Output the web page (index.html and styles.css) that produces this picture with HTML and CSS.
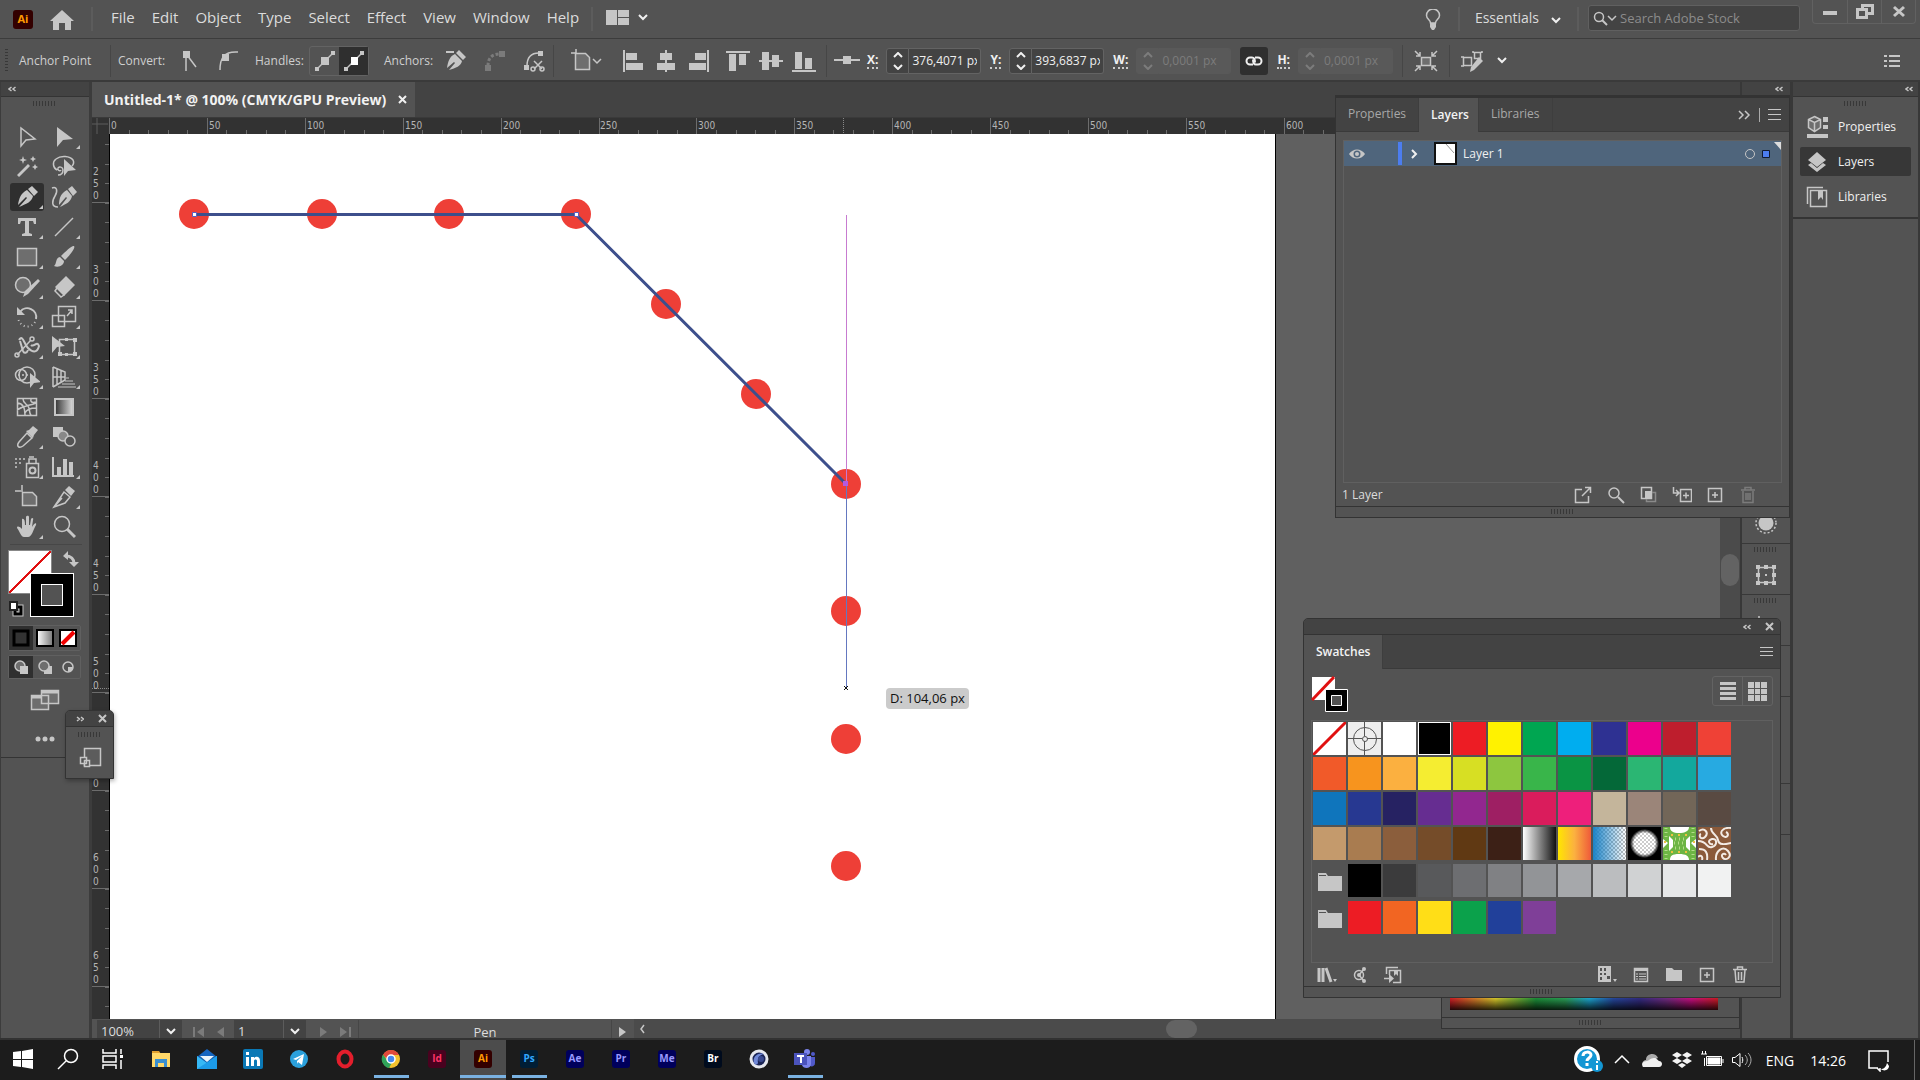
FILE: index.html
```html
<!DOCTYPE html>
<html lang="en">
<head>
    <meta charset="UTF-8">
    <meta name="viewport" content="width=device-width, initial-scale=1.0">
    <title>Untitled-1* @ 100% (CMYK/GPU Preview)</title>
    <link rel="stylesheet" href="styles.css">
</head>
<body>
    <header class="menubar">
        <span class="ai-logo">Ai</span>
        <button class="home" aria-label="Home"><svg width="24" height="20" class="solid"><path d="M12 0 0 11h3v9h6v-7h6v7h6v-9h3z"/></svg></button>
        <i class="sep"></i>
        <nav class="menus">
            <button>File</button><button>Edit</button><button>Object</button><button>Type</button><button>Select</button><button>Effect</button><button>View</button><button>Window</button><button>Help</button>
        </nav>
        <i class="sep"></i>
        <button class="arrange" aria-label="Arrange documents">
            <svg width="23" height="15" class="solid"><path d="M0 0h11v15H0zM12 0h11v7H12zM12 8h11v7H12z"/></svg>
            <svg width="10" height="7" class="chev"><path d="M1 1l4 4 4-4"/></svg>
        </button>
        <button class="bulb" aria-label="Learn"><svg width="16" height="21" class="line"><path d="M5.500 14c0-3-4-4-4-7.500a6 6 0 0 1 13 0c0 3.500-4 4.500-4 7.500z"/><path class="f" d="M5 14h6v4l-2 3H7l-2-3z"/></svg></button>
        <i class="sep"></i>
        <button class="essentials">Essentials <svg width="10" height="7" class="chev"><path d="M1 1l4 4 4-4"/></svg></button>
        <i class="sep"></i>
        <label class="search">
            <svg width="24" height="15" class="line"><circle cx="6" cy="6" r="4.500"/><path d="M9 9l5 5" stroke-width="2"/><path d="M15 5l4 4 4-4"/></svg>
            <input type="text" placeholder="Search Adobe Stock">
        </label>
        <div class="win-buttons">
            <button aria-label="Minimize"><svg width="14" height="16" class="solid"><path d="M0 7h14v4H0z"/></svg></button>
            <button aria-label="Restore"><svg width="18" height="16" class="line thick"><path d="M6.500 5V1.500h10v8H12M1.500 5.500h9v8h-9z"/></svg></button>
            <button aria-label="Close"><svg width="14" height="14" class="line thick"><path d="M2 2l10 9M12 2L2 11"/></svg></button>
        </div>
    </header>

    <section class="controlbar">
        <i class="side-grip"></i>
        <span class="mode">Anchor Point</span>
        <i class="sep"></i>
        <span class="group-label">Convert:</span>
        <button class="ctl"><svg width="24" height="24" class="line"><path d="M8 4v18M9 6l9 12"/><path class="f" d="M5 2h7v7H5z"/></svg></button>
        <button class="ctl"><svg width="24" height="24" class="line"><path d="M3 21c0-12 4-19 18-18"/><path class="f" d="M5 5h7v7H5z"/></svg></button>
        <span class="group-label">Handles:</span>
        <div class="toggle">
            <button aria-label="Show handles"><svg width="22" height="22" class="line"><path d="M3 19L19 3"/><path class="f" d="M1 17h4v4H1zM17 1h4v4h-4zM7 7h8v8H7z"/></svg></button>
            <button class="on" aria-label="Hide handles"><svg width="22" height="22" class="line"><path d="M3 19L19 3"/><path class="f" d="M1 17h4v4H1zM17 1h4v4h-4z"/><path fill="#fff" stroke="none" d="M8 7h7v8H8z"/></svg></button>
        </div>
        <span class="group-label">Anchors:</span>
        <button class="ctl"><svg width="24" height="24" class="solid"><path d="M2 2h8v2H2zM12 4l3-3 7 7-3 3zM11 5l7 7c-1 5-6 7-13 9l6-7-1-1-7 6c1-7 3-12 8-14z"/></svg></button>
        <button class="ctl dim"><svg width="24" height="24" class="line"><path d="M5 17C5 9 9 5 17 5" stroke-width="3" stroke-dasharray="3 2"/><path class="f" d="M2 16h6v6H2zM16 2h6v6h-6z"/></svg></button>
        <button class="ctl"><svg width="24" height="24" class="line"><path d="M5 17C5 9 9 4 17 4M12 12l8 8M20 12l-8 8"/><circle cx="11" cy="20" r="2"/><circle cx="20" cy="20" r="2"/><path class="f" d="M2 16h5v5H2zM16 2h5v5h-5z"/></svg></button>
        <i class="sep"></i>
        <button class="ctl wide"><svg width="32" height="24" class="line"><path d="M5 0v5M0 4h5"/><path fill="#6e6e6e" d="M4.500 4.500h10l4 4v12h-14z"/><path d="M22 10l4 4 4-4"/></svg></button>
        <div class="aligns">
            <button><svg width="22" height="24" class="solid"><path d="M1 1h2v22H1zM4 4h11v7H4zM4 14h17v7H4z"/></svg></button>
            <button><svg width="22" height="24" class="solid"><path d="M10 1h2v22h-2zM5 4h12v7H5zM2 14h18v7H2z"/></svg></button>
            <button><svg width="22" height="24" class="solid"><path d="M19 1h2v22h-2zM7 4h11v7H7zM1 14h17v7H1z"/></svg></button>
        </div>
        <div class="aligns">
            <button><svg width="24" height="22" class="solid"><path d="M0 1h24v2H0zM3 4h7v17H3zM13 4h7v11h-7z"/></svg></button>
            <button><svg width="24" height="22" class="solid"><path d="M0 10h24v2H0zM3 2h7v18H3zM13 5h7v12h-7z"/></svg></button>
            <button><svg width="24" height="22" class="solid"><path d="M0 20h24v2H0zM3 2h7v17H3zM13 8h7v11h-7z"/></svg></button>
        </div>
        <i class="sep"></i>
        <button class="ctl narrow"><svg width="26" height="12" class="solid"><path d="M0 4h26v2H0zM9 1h8v8H9z"/></svg></button>
        <div class="field"><label for="px">X:</label>
            <span class="spin"><svg width="12" height="18" class="chev"><path d="M2 5l4-4 4 4M2 13l4 4 4-4"/></svg></span><input id="px" type="text" value="376,4071 px"></div>
        <div class="field"><label for="py">Y:</label>
            <span class="spin"><svg width="12" height="18" class="chev"><path d="M2 5l4-4 4 4M2 13l4 4 4-4"/></svg></span><input id="py" type="text" value="393,6837 px"></div>
        <div class="field off"><label for="pw">W:</label>
            <span class="spin"><svg width="12" height="18" class="chev"><path d="M2 5l4-4 4 4M2 13l4 4 4-4"/></svg></span><input id="pw" type="text" value="0,0001 px" disabled></div>
        <button class="link-wh" aria-label="Constrain"><svg width="20" height="12" class="chev"><path d="M9 9.500H6a3.500 3.500 0 0 1 0-7h2c3 0 3 3 3 5M11 2.500h3a3.500 3.500 0 0 1 0 7h-2c-3 0-3-3-3-5"/></svg></button>
        <div class="field off"><label for="ph">H:</label>
            <span class="spin"><svg width="12" height="18" class="chev"><path d="M2 5l4-4 4 4M2 13l4 4 4-4"/></svg></span><input id="ph" type="text" value="0,0001 px" disabled></div>
        <i class="sep"></i>
        <button class="ctl mid"><svg width="24" height="22" class="line"><path fill="#6e6e6e" d="M7.500 7.500h9v8h-9z"/><path d="M1 1l5 5M6 2v4H2M23 1l-5 5M18 2v4h4M1 21l5-5M2 16h4v4M23 21l-5-5M22 16h-4v4"/></svg></button>
        <i class="sep"></i>
        <button class="ctl mid"><svg width="24" height="24" class="line"><path d="M2.500 8.500h8v8h-8zM13.500 3.500h6v6h-6zM0 8h3M0 17h3M12 2v2M21 2v2"/><path class="f" d="M9 23l1-5 8-10 4 4-9 9z"/></svg></button>
        <svg width="12" height="8" class="chev"><path d="M2 1l4 4 4-4"/></svg>
        <button class="bar-menu" aria-label="Control menu"><svg width="16" height="14" class="solid"><path d="M0 1h3v2H0zM5 1h11v2H5zM0 6h3v2H0zM5 6h11v2H5zM0 11h3v2H0zM5 11h11v2H5z"/></svg></button>
    </section>

    <main class="workspace">
        <aside class="tools">
            <div class="dock-head left"><svg width="8" height="6" class="line"><path d="M3.500 1L1 3l2.500 2M7.500 1L5 3l2.500 2"/></svg></div>
            <i class="grip"></i>
            <div class="tool-grid">
                <button><svg width="24" height="24" class="line"><path d="M6 3v18l5-6 9-1z"/></svg></button>
                <button class="more"><svg width="24" height="24" class="solid"><path d="M5 2v20l6-7 10-1z"/></svg></button>
                <button><svg width="24" height="24" class="solid"><path d="M2 20L13 9l2 2L4 22zM8 1l1 3 3 1-3 1-1 3-1-3-3-1 3-1zM18 1l1 2 2 1-2 1-1 2-1-2-2-1 2-1zM20 9l1 2 2 1-2 1-1 2-1-2-2-1 2-1z"/></svg></button>
                <button><svg width="24" height="24" class="line"><path d="M6 20c3 0 5-2 5-5s-4-4-5-2 2 4 3 2M5 15C1 13 0 7 4 4c5-4 14-3 17 1 1 2 1 4-1 6"/><path class="f" d="M12 4v17l4-5 8-1z"/></svg></button>
                <button class="more on"><svg width="24" height="24" class="solid"><path d="M13 4l4-3 6 6-4 4zM12 5l6 6c-1 6-7 8-14 11l8-9-1-1-8 8c1-7 3-12 9-15z"/></svg></button>
                <button><svg width="26" height="24" class="line"><path d="M1 3c5-2 6 3 3 8s-4 11 3 11"/><path class="f" d="M17 4l4-3 5 6-4 4zM16 5l5 6c-1 6-6 8-12 11l7-9-1-1-7 8c0-7 2-12 8-15z"/></svg></button>
                <button class="more"><svg width="24" height="24" class="solid"><path d="M3 3h18v6h-2l-1-3h-4v12l3 1v2H7v-2l3-1V6H6L5 9H3z"/></svg></button>
                <button class="more"><svg width="24" height="24" class="line"><path d="M3 21L21 3"/></svg></button>
                <button class="more"><svg width="24" height="24" class="line"><path fill="#6e6e6e" d="M2.500 3.500h19v17h-19z"/></svg></button>
                <button class="more"><svg width="24" height="24" class="solid"><path d="M22 1c2 2-5 10-9 14l-4-4c5-5 11-11 13-10zM8 12l4 4c0 4-5 7-10 5 3-2 1-8 6-9z"/></svg></button>
                <button class="more"><svg width="26" height="24" class="line"><circle cx="9" cy="10" r="7.500" fill="#6e6e6e"/><path class="f" d="M9 22l2-6L24 4l2 2-12 13z"/></svg></button>
                <button class="more"><svg width="24" height="24" class="line"><path class="f" d="M14 1l9 9-11 11-9-9z"/><path d="M5 13l7 7-3 2-6-6z" fill="#535353"/></svg></button>
                <button class="more"><svg width="24" height="24" class="line"><path d="M5 7c6-8 18-2 16 7" stroke-width="2"/><path d="M20 17c-4 7-15 6-17-4" stroke-width="2" stroke-dasharray="1 3"/><path class="f" d="M2 2v8h8z"/></svg></button>
                <button class="more"><svg width="26" height="24" class="line"><path d="M7.500 1.500h17v15h-17zM1.500 10.500h12v11h-12zM16 11l5-6M17 5h4v4"/></svg></button>
                <button class="more"><svg width="26" height="24" class="line"><path d="M5 5c4-6 5 4 9 8s9 6 11-2c-2-6-5 2-8-1M6 6l3 10c1 3 4 2 5-1" stroke-width="2"/><path d="M3 20L17 5"/><circle cx="3" cy="20" r="2"/><circle cx="18" cy="4" r="2"/></svg></button>
                <button class="more"><svg width="26" height="24" class="line"><path d="M8.500 4.500h15v15h-15z"/><path class="f" d="M1 1v17l5-6 8-1zM22 3h4v4h-4zM22 17h4v4h-4zM7 17h4v4H7zM14 3h3v3h-3zM14 18h3v3h-3z"/></svg></button>
                <button class="more"><svg width="26" height="24" class="line"><circle cx="13" cy="10" r="8"/><circle cx="7" cy="10" r="5.500"/><path d="M4 10h12" stroke-dasharray="2 2"/><path class="f" d="M16 8v15l4-5 7-1z"/></svg></button>
                <button class="more"><svg width="26" height="24" class="line"><path d="M2 2v20M2 2l12 5v8L2 22M6 4v15M10 5v12M2 12h12"/><path d="M15 13h3M14 16h8M11 19h13M7 22h18" stroke-width="1"/></svg></button>
                <button><svg width="24" height="24" class="line"><path d="M2.500 3.500h19v17h-19zM2 8c6 0 8 4 8 12M2 15c8-5 12-4 19-7M8 4c0 5 5 5 6 9 1 3 0 5 2 7M21 13c-5 0-9 1-11 5M16 4c-1 3 1 4 5 3"/></svg></button>
                <button><svg width="24" height="24"><defs><linearGradient id="gt"><stop offset="0" stop-color="#333"/><stop offset="1" stop-color="#ddd"/></linearGradient></defs><path fill="url(#gt)" stroke="#c6c6c6" stroke-width="2" d="M3 4h18v16H3z"/></svg></button>
                <button class="more"><svg width="24" height="24" class="line"><path d="M12 8l5 5-9 8c-4 3-7 0-4-4z"/><path class="f" d="M11 6l3-1 4-4 5 4-4 5-1 3z"/></svg></button>
                <button><svg width="26" height="24" class="line"><path class="f" d="M2 2h10v10H2z"/><circle cx="12" cy="11" r="5" fill="#888"/><circle cx="19" cy="16" r="5" fill="#535353"/></svg></button>
                <button class="more"><svg width="26" height="24" class="line"><path d="M12.500 8.500h12v14h-12zM15 8V4h7v4M15 2h5"/><circle cx="18.500" cy="15.500" r="3" stroke-width="2"/><path d="M1 4h10M1 8h8M1 12h4" stroke-dasharray="2 2"/></svg></button>
                <button class="more"><svg width="26" height="24" class="solid"><path d="M1 2h2v18h20v2H1zM6 12h4v8H6zM12 4h4v16h-4zM18 7h4v13h-4z"/></svg></button>
                <button><svg width="26" height="26" class="line"><path d="M8 1v7M1 7h6"/><path fill="#6e6e6e" d="M8.500 8.500h10l4 4v9h-14z"/></svg></button>
                <button class="more"><svg width="24" height="24" class="line"><path d="M2 22L12 7l6 5-5 6zM2 22l8-9"/><path class="f" d="M13 5l4-4 6 5-4 5z"/></svg></button>
                <button class="more"><svg width="24" height="24" class="solid"><path d="M7 4c2-1 3 1 3 6h1V2c1-2 3-1 3 0v8h1l1-6c1-2 3-1 2 1l-1 7c2-4 5-5 4-2-3 5-4 12-8 12h-4c-3 0-5-7-7-9 0-2 2-2 5 1z"/></svg></button>
                <button><svg width="24" height="24" class="line"><circle cx="10" cy="9" r="7.500"/><path d="M15 14l8 8" stroke-width="3"/></svg></button>
            </div>
            <div class="paint">
                <span class="paint-fill"></span>
                <span class="paint-stroke"></span>
                <svg class="paint-swap line" width="16" height="16"><path d="M2 5c6 0 9 2 9 8" stroke-width="3"/><path class="f" d="M0 5l5-5v9zM6 11h10l-5 5z"/></svg>
                <svg class="paint-default" width="16" height="16"><path fill="none" stroke="#c6c6c6" stroke-width="5" d="M7 6h6v7H7z"/><path fill="none" stroke="#000" stroke-width="3" d="M7 6h6v7H7z"/><path fill="#fff" stroke="#222" stroke-width="2" d="M2 1h7v8H2z"/></svg>
            </div>
            <div class="trio">
                <button class="on"><svg width="18" height="18"><path fill="#333" stroke="#000" stroke-width="3" d="M2 2h14v14H2z"/></svg></button>
                <button><svg width="18" height="18"><defs><linearGradient id="gm"><stop offset="0" stop-color="#fff"/><stop offset="1" stop-color="#777"/></linearGradient></defs><path fill="url(#gm)" stroke="#000" stroke-width="2" d="M1 1h16v16H1z"/></svg></button>
                <button><svg width="18" height="18"><path fill="#fff" stroke="#000" stroke-width="2" d="M1 1h16v16H1z"/><path stroke="#f00000" stroke-width="4" d="M3 15L15 3"/></svg></button>
            </div>
            <div class="trio modes">
                <button class="on"><svg width="16" height="16" class="line"><circle cx="7" cy="7" r="5" fill="#6e6e6e"/><path class="f" d="M7 7h8v8H7z"/></svg></button>
                <button><svg width="16" height="16" class="line"><path class="f" d="M7 7h8v8H7z"/><circle cx="7" cy="7" r="5" fill="#6e6e6e"/></svg></button>
                <button><svg width="16" height="16" class="line"><circle cx="8" cy="8" r="5"/><path class="f" d="M8 8h5c0 3-2 5-5 5z"/></svg></button>
            </div>
            <button class="screen-mode"><svg width="30" height="22" class="line"><path fill="#6e6e6e" d="M1.500 6.500h17v14h-17zM11.500 1.500h17v13h-17z"/><path d="M11 3h17M1 8h10" stroke-width="3"/></svg></button>
            <button class="dots"><svg width="20" height="6" class="solid"><circle cx="3" cy="3" r="2.500"/><circle cx="10" cy="3" r="2.500"/><circle cx="17" cy="3" r="2.500"/></svg></button>
        </aside>

        <section class="document">
            <div class="tabs">
                <div class="doc-tab">Untitled-1* @ 100% (CMYK/GPU Preview) <button aria-label="Close document"><svg width="10" height="10" class="chev"><path d="M1 1l7 7M8 1L1 8"/></svg></button></div>
            </div>
            <!-- 97.9px per 50 units -->
            <svg class="ruler-x" height="16">
                <path d="M0 6h16M5 0v16" stroke="#5c5c5c"/>
                <g shape-rendering="crispEdges" stroke="#6c6c6c">
                    <path d="M17 8h1700" stroke-width="16" stroke-dasharray="1 96.900"/>
                    <path d="M17 14h1700" stroke-width="4" stroke-dasharray="1 18.580"/>
                </g>
                <path d="M751.500 0v16" stroke="#888" stroke-dasharray="1 1"/>
                <g class="ruler-text">
                    <text x="19" y="11">0</text><text x="117" y="11">50</text><text x="215" y="11">100</text><text x="313" y="11">150</text><text x="411" y="11">200</text><text x="508" y="11">250</text><text x="606" y="11">300</text><text x="704" y="11">350</text><text x="802" y="11">400</text><text x="900" y="11">450</text><text x="998" y="11">500</text><text x="1096" y="11">550</text><text x="1194" y="11">600</text>
                </g>
            </svg>
            <div class="view">
                <svg class="ruler-y" width="17">
                    <g shape-rendering="crispEdges" stroke="#6c6c6c">
                        <path d="M8 68v900" stroke-width="17" stroke-dasharray="1 97"/>
                        <path d="M15 10v900" stroke-width="4" stroke-dasharray="1 18.600"/>
                    </g>
                    <path d="M0 554.500h17" stroke="#888" stroke-dasharray="1 1"/>
                    <g class="ruler-text">
                        <text x="1" y="41">2</text><text x="1" y="53">5</text><text x="1" y="65">0</text>
                        <text x="1" y="139">3</text><text x="1" y="151">0</text><text x="1" y="163">0</text>
                        <text x="1" y="237">3</text><text x="1" y="249">5</text><text x="1" y="261">0</text>
                        <text x="1" y="335">4</text><text x="1" y="347">0</text><text x="1" y="359">0</text>
                        <text x="1" y="433">4</text><text x="1" y="445">5</text><text x="1" y="457">0</text>
                        <text x="1" y="531">5</text><text x="1" y="543">0</text><text x="1" y="555">0</text>
                        <text x="1" y="629">5</text><text x="1" y="641">5</text><text x="1" y="653">0</text>
                        <text x="1" y="727">6</text><text x="1" y="739">0</text><text x="1" y="751">0</text>
                        <text x="1" y="825">6</text><text x="1" y="837">5</text><text x="1" y="849">0</text>
                    </g>
                </svg>
                <div class="canvas">
                    <svg class="artboard">
                        <g fill="#ee3f37">
                            <circle cx="84" cy="80" r="15"/><circle cx="212" cy="80" r="15"/><circle cx="339" cy="80" r="15"/><circle cx="466" cy="80" r="15"/>
                            <circle cx="556" cy="170" r="15"/><circle cx="646" cy="260" r="15"/><circle cx="736" cy="350" r="15"/>
                            <circle cx="736" cy="477" r="15"/><circle cx="736" cy="605" r="15"/><circle cx="736" cy="732" r="15"/>
                        </g>
                        <path d="M84 80.500h382L735 349" fill="none" stroke="#3d4f8c" stroke-width="3"/>
                        <path d="M736.500 81v269" stroke="#c77bd0"/>
                        <path d="M736.500 350v203" stroke="#6478c0"/>
                        <path d="M82.500 78.500h4v4h-4zM464.500 78.500h4v4h-4z" fill="#fff" stroke="#5a5fc0"/>
                        <path d="M733 347h5v5h-5z" fill="#b45ae0"/>
                        <path d="M734 552l4 4M738 552l-4 4" stroke="#111"/>
                    </svg>
                    <output class="measure">D: 104,06 px</output>
                </div>
                <div class="scroll-y"><i></i></div>
            </div>
            <div class="status">
                <input class="zoom" type="text" value="100%" aria-label="Zoom">
                <button class="drop"><svg width="10" height="7" class="chev"><path d="M1 1l4 4 4-4"/></svg></button>
                <button class="step"><svg width="12" height="10" class="solid"><path d="M0 0h2v10H0zM11 0v10L4 5z"/></svg></button>
                <button class="step"><svg width="8" height="10" class="solid"><path d="M7 0v10L0 5z"/></svg></button>
                <input class="board" type="text" value="1" aria-label="Artboard">
                <button class="drop"><svg width="10" height="7" class="chev"><path d="M1 1l4 4 4-4"/></svg></button>
                <button class="step"><svg width="8" height="10" class="solid"><path d="M1 0v10l7-5z"/></svg></button>
                <button class="step"><svg width="12" height="10" class="solid"><path d="M10 0h2v10h-2zM1 0v10l7-5z"/></svg></button>
                <span class="tool-name">Pen</span>
                <button class="play"><svg width="8" height="10" class="solid"><path d="M0 0v10l7-5z"/></svg></button>
                <div class="scroll-x"><svg width="8" height="10" class="line"><path d="M5 1L2 5l3 4"/></svg><i></i></div>
            </div>
        </section>

        <aside class="icon-dock">
            <div class="dock-head"><svg width="8" height="6" class="line"><path d="M3.500 1L1 3l2.500 2M7.500 1L5 3l2.500 2"/></svg></div>
            <div class="dock-cell first"><svg width="24" height="24" class="line"><circle cx="12" cy="12" r="10" stroke-dasharray="2 2"/><circle class="f" cx="12" cy="12" r="7.500"/></svg></div>
            <div class="dock-cell"><i class="grip"></i><svg width="22" height="22" class="line"><path d="M3.500 3.500h15v15h-15z"/><path class="f" d="M1 1h4v4H1zM9 1h4v4H9zM17 1h4v4h-4zM1 9h4v4H1zM17 9h4v4h-4zM1 17h4v4H1zM9 17h4v4H9zM17 17h4v4h-4zM10 10h2v2h-2z"/></svg></div>
            <div class="dock-cell"><i class="grip"></i><svg width="20" height="20" class="line"><path d="M3 1v12M3 4h12"/></svg></div>
            <div class="dock-cell"></div>
            <div class="dock-cell tall"></div>
            <div class="dock-cell"></div>
        </aside>

        <aside class="panel-dock">
            <div class="dock-head"><svg width="8" height="6" class="line"><path d="M3.500 1L1 3l2.500 2M7.500 1L5 3l2.500 2"/></svg></div>
            <div class="dock-group">
                <i class="grip"></i>
                <button><svg width="22" height="24" class="line"><path fill="#6e6e6e" d="M8.500 1.500l6 3v8l-6 4-6-4v-8zM2.500 4.500l6 3 6-3M8.500 8v8"/><path class="f" d="M17 2h5v5h-5zM17 10h5v4h-5zM1 19h21v4H1z"/></svg>Properties</button>
                <button class="on"><svg width="22" height="24" class="solid"><path d="M11 2l9 8-9 7-9-7zM2 15l3-2 6 5 6-5 3 2-9 7z"/></svg>Layers</button>
                <button><svg width="22" height="24" class="line"><path d="M1.500 19V2.500H17M4.500 5.500h16v16h-16z"/><path class="f" d="M12 6h5v9l-2-3-3 3z"/></svg>Libraries</button>
            </div>
        </aside>

        <section class="color-panel">
            <i class="spectrum"></i>
            <div class="resizer"><i class="grip"></i></div>
        </section>

        <section class="panel layers">
            <div class="panel-tabs">
                <button>Properties</button><button class="on">Layers</button><button>Libraries</button>
                <span class="tab-tools"><svg width="14" height="10" class="line"><path d="M2 1l4 4-4 4M8 1l4 4-4 4"/></svg><i></i><svg width="13" height="11" class="solid"><path d="M0 0h13v1H0zM0 5h13v1H0zM0 10h13v1H0z"/></svg></span>
            </div>
            <div class="layer-list">
                <div class="layer-row">
                    <svg class="eye" width="18" height="12"><path fill="#c6c6c6" d="M1 6c4-6 12-6 16 0-4 6-12 6-16 0z"/><circle cx="9" cy="6" r="3.500" fill="#4f657c"/><circle cx="9" cy="6" r="2" fill="#c6c6c6"/></svg>
                    <i class="layer-mark"></i>
                    <svg width="8" height="12" class="chev"><path d="M2 2l4 4-4 4"/></svg>
                    <svg class="thumb" width="23" height="23"><path fill="#fff" stroke="#111" stroke-width="2" d="M1 1h21v21H1z"/><path stroke="#999" fill="none" d="M12 2l8 9"/></svg>
                    <span>Layer 1</span>
                    <svg class="target" width="40" height="24"><circle cx="9" cy="12" r="4.500" fill="none" stroke="#c6c6c6"/><path fill="#4c7df0" stroke="#111a30" d="M21.500 8.500h7v7h-7z"/><path fill="#ddd" d="M33 0h7v8z"/></svg>
                </div>
            </div>
            <div class="panel-foot">
                <span>1 Layer</span>
                <button><svg width="18" height="18" class="line"><path d="M8 3.500H1.500v13h13V10M8 10l8-8M11 1.500h5.500V7"/></svg></button>
                <button><svg width="18" height="18" class="line"><circle cx="7" cy="7" r="5"/><path d="M11 11l6 6" stroke-width="2"/></svg></button>
                <button><svg width="18" height="18" class="line"><path d="M1.500 1.500h10v11h-10z"/><path d="M6.500 6.500h9v9h-9z" stroke="#8a8a8a"/><path class="f" d="M5 5h7v8H5z"/></svg></button>
                <button><svg width="20" height="18" class="line"><path d="M1.500 1v6H6M4 4l3 3-3 3M8.500 3.500h11v12h-11zM11 9.500h6M14 6.500v6"/></svg></button>
                <button><svg width="18" height="18" class="line"><path d="M2.500 2.500h13v13h-13zM6 9h6M9 6v6"/></svg></button>
                <button class="dim"><svg width="18" height="18" class="line"><path d="M2 4h14M6 4V1.500h6V4M4 5v11.500h10V5M7 7v7M9 7v7M11 7v7"/></svg></button>
            </div>
            <div class="resizer"><i class="grip"></i></div>
        </section>

        <section class="panel swatches">
            <div class="panel-head"><svg width="8" height="6" class="line"><path d="M3.500 1L1 3l2.500 2M7.500 1L5 3l2.500 2"/></svg><svg width="9" height="9" class="line bold"><path d="M1 1l7 7M8 1L1 8"/></svg></div>
            <div class="panel-tabs">
                <button class="on">Swatches</button>
                <span class="tab-tools"><svg width="13" height="10" class="solid"><path d="M0 0h13v1H0zM0 4h13v1H0zM0 8h13v1H0z"/></svg></span>
            </div>
            <div class="swatch-bar">
                <svg width="38" height="38"><path fill="#fff" d="M1 1h23v23H1z"/><path stroke="#e01010" stroke-width="3" d="M1 24L23 1"/><path fill="#000" stroke="#fff" d="M14.500 13.500h22v22h-22z"/><path fill="#535353" stroke="#fff" d="M20.500 19.500h10v10h-10z"/></svg>
                <div class="view-toggle">
                    <button aria-label="List view"><svg width="16" height="19" class="solid"><path d="M0 0h16v3H0zM0 5h16v3H0zM0 10h16v3H0zM0 15h16v3H0z"/></svg></button>
                    <button aria-label="Thumbnail view"><svg width="19" height="19" class="solid"><path d="M0 0h6v6H0zM7 0h5v6H7zM13 0h6v6h-6zM0 7h6v5H0zM7 7h5v5H7zM13 7h6v5h-6zM0 13h6v6H0zM7 13h5v6H7zM13 13h6v6h-6z"/></svg></button>
                </div>
            </div>
            <div class="swatch-box">
                <div class="swatch-grid">
                    <b><svg width="33" height="33"><path fill="#fff" d="M0 0h33v33H0z"/><path stroke="#e01010" stroke-width="3" d="M0 33L33 0"/></svg></b>
                    <b><svg width="33" height="33"><path fill="#eee" d="M0 0h33v33H0z"/><g fill="none" stroke="#555"><circle cx="17" cy="17" r="11.500"/><circle cx="17" cy="17" r="2.500"/><path d="M0 16.500h14M19 16.500h14M16.500 0v14M16.500 19v14"/></g></svg></b>
                    <b style="background:#fff"></b><b class="picked" style="background:#000"></b><b style="background:#ed1c24"></b><b style="background:#fff200"></b><b style="background:#00a651"></b><b style="background:#00adef"></b><b style="background:#2e3192"></b><b style="background:#ec008c"></b><b style="background:#be1e2d"></b><b style="background:#ef4136"></b>
                    <b style="background:#f15a29"></b><b style="background:#f7941e"></b><b style="background:#fbb040"></b><b style="background:#f5ed31"></b><b style="background:#d7df23"></b><b style="background:#8dc63f"></b><b style="background:#39b54a"></b><b style="background:#0a9444"></b><b style="background:#046838"></b><b style="background:#2bb673"></b><b style="background:#13a89d"></b><b style="background:#27aae1"></b>
                    <b style="background:#0f75bc"></b><b style="background:#273891"></b><b style="background:#262262"></b><b style="background:#662d91"></b><b style="background:#92278f"></b><b style="background:#9e1f63"></b><b style="background:#da1c5c"></b><b style="background:#ee1f7b"></b><b style="background:#c4b59b"></b><b style="background:#9b8579"></b><b style="background:#726658"></b><b style="background:#594a42"></b>
                    <b style="background:#c49a6c"></b><b style="background:#a97c50"></b><b style="background:#8b5e3c"></b><b style="background:#754c29"></b><b style="background:#603913"></b><b style="background:#3c2016"></b>
                    <b class="g-gray"></b><b class="g-sun"></b><b class="g-sky"></b>
                    <b class="g-fade"><i></i></b>
                    <b><svg width="33" height="33"><path fill="#fff" d="M0 0h33v33H0z"/><path fill="#6db544" d="M0 0h7c0 4 3 6 9 6s10-2 10-6h7v12l-5 4 5 5v12h-7c0-4-3-6-10-6s-9 2-9 6H0V21l5-5-5-4z"/><path fill="#fff" d="M6 9l4 4v7l-4 4zM27 9l-4 4v7l4 4z"/><path stroke="#b4dc8a" stroke-width="3" stroke-dasharray="1 3" fill="none" d="M3 1v10M30 1v10M3 23v10M30 23v10M12 12h11M11 16h12M12 21h11"/><path stroke="#f0c040" stroke-width="2" stroke-dasharray="2 5" fill="none" d="M8 8h18M8 25h18M2 14v6M31 14v6"/></svg></b>
                    <b><svg width="33" height="33"><path fill="#8b5a3a" d="M0 0h33v33H0z"/><g fill="none" stroke="#f3ebe4" stroke-width="2"><path d="M1 4c6-4 10 2 6 6s-7-2-4-3M0 14c10 0 8 8 14 6s5-9 0-8-3 6 1 5M33 1c-9-1-12 5-8 8s7-2 3-4M18 33c-1-9 7-15 12-9s-2 10-5 7 1-6 3-3M1 22c7 0 9 4 8 11M13 1c0 6 6 6 7 12s8 4 13 3M0 30c3-3 5 0 4 3"/></g></svg></b>
                </div>
                <div class="swatch-grid group">
                    <svg class="folder" width="33" height="33"><path fill="#c6c6c6" d="M5 9h8l2 3h14v15H5z"/><path stroke="#535353" d="M6 11.500h7"/></svg>
                    <b style="background:#000"></b><b style="background:#3b3b3c"></b><b style="background:#58595b"></b><b style="background:#6d6e71"></b><b style="background:#808184"></b><b style="background:#929497"></b><b style="background:#a6a8ab"></b><b style="background:#bbbdbf"></b><b style="background:#d0d2d3"></b><b style="background:#e6e7e8"></b><b style="background:#f1f2f2"></b>
                </div>
                <div class="swatch-grid group">
                    <svg class="folder" width="33" height="33"><path fill="#c6c6c6" d="M5 9h8l2 3h14v15H5z"/><path stroke="#535353" d="M6 11.500h7"/></svg>
                    <b style="background:#ed1c24"></b><b style="background:#f26522"></b><b style="background:#ffde17"></b><b style="background:#0ba14b"></b><b style="background:#21409a"></b><b style="background:#7f3f98"></b>
                </div>
            </div>
            <div class="panel-foot">
                <button><svg width="20" height="16" class="line"><path d="M2 1v14M6 1v14M9 1l5 14" stroke-width="3"/><path class="f" d="M16 12h4l-2 3z"/></svg></button>
                <button><svg width="16" height="16" class="line"><circle cx="7" cy="8" r="4.500"/><path d="M7 8l5-6M7 8l5 6"/><circle class="f" cx="7" cy="8" r="2"/><circle class="f" cx="12" cy="2" r="2"/><circle class="f" cx="12" cy="14" r="2"/></svg></button>
                <button class="push"><svg width="18" height="18" class="line"><path d="M2.500 8V1.500H14M9 16.500h7.500v-12h-11V9M0 12.500h7"/><path class="f" d="M5 8l5 4.500L5 17zM10 5h4v5l-2-2-2 2z"/></svg></button>
                <button><svg width="19" height="17" class="solid"><path d="M0 0h13v16H0z"/><path fill="#535353" stroke="none" d="M2 2h2v3H2zM6 2h2v3H6zM2 7h2v2H2zM6 7h2v2H6zM2 11h2v3H2zM9 10h3v3H9z"/><path d="M15 13h4l-2 3z"/></svg></button>
                <button><svg width="16" height="16" class="line"><path d="M1.500 1.500h13v13h-13z"/><path d="M1 2.500h14" stroke-width="3"/><path d="M3 7h2M6 7h7M3 9.500h2M6 9.500h7M3 12h2M6 12h7" stroke-width="1"/></svg></button>
                <button><svg width="18" height="15" class="solid"><path d="M1 1h6l2 2h8v11H1z"/></svg></button>
                <button><svg width="16" height="16" class="line"><path d="M1.500 1.500h13v13h-13zM5 8h6M8 5v6"/></svg></button>
                <button><svg width="16" height="17" class="line"><path d="M1 3.500h14M5.500 3V1h5v2M3 4l1 12h8l1-12M6.500 6v8M9.500 6v8"/></svg></button>
            </div>
            <div class="resizer"><i class="grip"></i></div>
        </section>

        <section class="mini-panel">
            <div class="panel-head"><svg width="8" height="6" class="line"><path d="M1 1l2.500 2L1 5M5 1l2.500 2L5 5"/></svg><svg width="9" height="9" class="line bold"><path d="M1 1l7 7M8 1L1 8"/></svg></div>
            <i class="grip"></i>
            <svg width="24" height="22" class="line"><path fill="#5c5c5c" d="M6.500 1.500h16v17h-16z"/><path fill="#535353" d="M6.500 13.500h5v6h-5zM2.500 10.500h6v6h-6z"/></svg>
        </section>
    </main>

    <footer class="taskbar">
        <button class="sys"><svg width="20" height="20" fill="#fff"><path d="M0 3l8-1v8H0zM9 2l11-2v10H9zM0 11h8v7l-8-1zM9 11h11v9L9 18z"/></svg></button>
        <button class="sys"><svg width="22" height="22" fill="none" stroke="#fff" stroke-width="1.500"><circle cx="14" cy="8" r="6.500"/><path d="M9 13l-8 8"/></svg></button>
        <button class="sys last"><svg width="22" height="20" fill="none" stroke="#fff" stroke-width="1.500"><path d="M1 0v4h13V0M1 20v-4h13v4M1 7h13v6H1zM19 0v5M19 11v9"/><path fill="#fff" stroke="none" d="M18 6h3v3h-3z"/></svg></button>
        <button class="app"><svg width="20" height="18"><path fill="#e0a030" d="M1 1h7l2 3H1z"/><path fill="#ffd869" d="M1 3h18v14H1z"/><path fill="#3a8fd0" d="M4 9h12v8h-3v-4H7v4H4z"/></svg></button>
        <button class="app"><svg width="22" height="20"><path fill="#1565c0" d="M1 8l10-8 10 8z"/><path fill="#36b8f5" d="M1 7h20v13H1z"/><path fill="#1460b0" d="M1 7l10 7 10-7z"/><path fill="#eaf4fb" d="M4 7h14l-7 6z"/><path fill="#1c9be8" d="M1 20L21 7v13z"/></svg></button>
        <button class="app"><svg width="20" height="20"><rect width="20" height="20" rx="2" fill="#0a78b5"/><path fill="#fff" d="M3 8h3v9H3zM3 3h3v3H3zM8 8h3v1c2-2 6-2 6 3v5h-3v-5c0-2-3-2-3 0v5H8z"/></svg></button>
        <button class="app"><svg width="18" height="18"><circle cx="9" cy="9" r="9" fill="#2ba0db"/><path fill="#fff" d="M3 9l11-5-2 11-4-3-1 2v-3l5-5-6 4z"/></svg></button>
        <button class="app"><svg width="18" height="20"><ellipse cx="9" cy="10" rx="6.500" ry="7.500" fill="none" stroke="#e31e2c" stroke-width="4"/></svg></button>
        <button class="app open"><svg width="20" height="20"><circle cx="10" cy="10" r="9" fill="#f2c12e"/><path fill="#e04a3c" d="M2 6a9 9 0 0 1 16 0h-8L6 10z"/><path fill="#2fa35a" d="M2 5.500l5 7 4 1-3 5.500A9 9 0 0 1 2 5.500z"/><circle cx="10" cy="10" r="4" fill="#4688f0" stroke="#fff" stroke-width="1.500"/></svg></button>
        <button class="app"><span class="cc id">Id</span></button>
        <button class="app open active"><span class="cc ai">Ai</span></button>
        <button class="app open"><span class="cc ps">Ps</span></button>
        <button class="app"><span class="cc ae">Ae</span></button>
        <button class="app"><span class="cc ae">Pr</span></button>
        <button class="app"><span class="cc ae">Me</span></button>
        <button class="app"><span class="cc br">Br</span></button>
        <button class="app"><svg width="20" height="20"><circle cx="10" cy="10" r="8" fill="#1a2456" stroke="#e6e8ee" stroke-width="3"/><path fill="#6f87d6" d="M5 14c-2-6 4-11 10-9-5 1-7 4-6 9-1 2-3 2-4 0z"/><circle cx="12" cy="10" r="3" fill="#3a4a90"/></svg></button>
        <button class="app open"><svg width="22" height="20"><circle cx="13" cy="3" r="3" fill="#7b83eb"/><circle cx="19" cy="5" r="2" fill="#5059c9"/><path fill="#5059c9" d="M15 8h6v6c0 3-3 4-5 3z"/><path fill="#7b83eb" d="M8 7h9v8c0 5-8 5-9 1z"/><path fill="#4b53bc" d="M0 4h13v12H0z"/><path fill="#fff" d="M3 6h7v2H8v6H6V8H3z"/></svg></button>
        <div class="tray">
            <svg class="help" width="30" height="28"><circle cx="14" cy="13" r="11.500" fill="#1497d4" stroke="#fff" stroke-width="3"/><path d="M10 10c0-5 8-5 8-1 0 3-4 3-4 6M14 17v3" stroke="#fff" stroke-width="3" fill="none"/><circle cx="24" cy="20" r="6" fill="#1497d4"/><path stroke="#fff" stroke-width="2" d="M24 19v5M24 15v2"/></svg>
            <svg width="30" height="20" fill="none" stroke="#fff" stroke-width="1.500"><path d="M8 13l7-7 7 7"/></svg>
            <svg width="30" height="20"><path fill="#aaa" d="M5 15c0-4 3-5 4-5 0-7 10-8 12-2z"/><path fill="#f0f0f0" d="M6 17c-2-3 0-6 4-6 2 0 3-3 7-3 3 0 3 2 5 3 4 0 4 6 0 6z"/></svg>
            <svg width="30" height="20" fill="#f4f4f4"><path d="M10 2l5 3-5 3-5-3zM20 2l5 3-5 3-5-3zM10 8l5 3-5 3-5-3zM20 8l5 3-5 3-5-3zM15 13l4 2-4 3-4-3z"/></svg>
            <svg width="30" height="20" fill="none" stroke="#fff"><path d="M9.500 6.500h15v9h-15zM26 9v4M7.500 8v8M4 4h6M5.500 1v3M8.500 1v3"/><path fill="#fff" d="M11 8h12v6H11z"/></svg>
            <svg width="30" height="20" fill="none" stroke="#fff"><path d="M5.500 7.500H8l5-4v13l-5-4H5.500zM15 7c1 2 1 4 0 6"/><path stroke="#aaa" d="M18 5c3 3 3 7 0 10M21 3c4 4 4 10 0 14"/></svg>
            <span class="lang">ENG</span>
            <time>14:26</time>
            <svg class="notif" width="22" height="22" fill="none" stroke="#fff" stroke-width="1.500"><path d="M10 18H1V1h19v11M9 18l3 3v-3"/><path fill="#fff" stroke="none" d="M19 13c-1 4-3 6-6 6 3 3 8 1 8-3z"/></svg>
            <i class="peek"></i>
        </div>
    </footer>
</body>
</html>
```
FILE: styles.css
```css
* {
    box-sizing: border-box;
}

html, body {
    margin: 0;
    height: 100%;
}

body {
    display: flex;
    flex-direction: column;
    overflow: hidden;
    background: #535353;
    color: #dcdcdc;
    font-family: "Open Sans", "Noto Sans", sans-serif;
    font-size: 12px;
}

button, input {
    margin: 0;
    padding: 0;
    border: 0;
    background: none;
    color: inherit;
    font: inherit;
    min-width: 0;
}

svg {
    display: block;
    flex: none;
}

.solid {
    fill: #c6c6c6;
}

.line {
    fill: none;
    stroke: #c6c6c6;
    stroke-width: 1.5;
}

.line.bold {
    stroke-width: 2;
}

.line.thick {
    stroke-width: 3;
}

.line .f {
    fill: #c6c6c6;
    stroke: none;
}

.chev {
    fill: none;
    stroke: #f0f0f0;
    stroke-width: 2;
}

.dim {
    opacity: 0.35;
}

.sep {
    flex: none;
    width: 1px;
    height: 32px;
    background: #464646;
}

.grip {
    display: block;
    width: 24px;
    height: 5px;
    margin: 0 auto;
    background: repeating-linear-gradient(90deg, #383838 0 1px, transparent 1px 3px);
}

/* Menu bar */
.menubar {
    display: flex;
    align-items: center;
    flex: none;
    height: 39px;
    padding: 0 4px 0 13px;
    border-bottom: 1px solid #3c3c3c;
}

.menubar .sep {
    width: 2px;
    height: 24px;
    background: #5c5c5c;
}

.ai-logo {
    width: 20px;
    height: 19px;
    border-radius: 3px;
    background: #330000;
    color: #ff9a00;
    font-size: 11px;
    font-weight: 700;
    line-height: 18px;
    text-align: center;
}

.home {
    margin: 2px 17px 0;
}

.menus {
    display: flex;
    gap: 1px;
    margin: 0 4px 0 10px;
    padding-bottom: 4px;
    font-size: 15px;
}

.menus button {
    padding: 0 8px;
}

.arrange {
    display: flex;
    align-items: center;
    gap: 9px;
    margin-left: 13px;
    padding-bottom: 3px;
}

.bulb {
    margin: 0 17px 0 auto;
}

.essentials {
    display: flex;
    align-items: center;
    gap: 12px;
    padding: 0 16px 4px 15px;
    font-size: 14px;
}

.essentials svg {
    margin-top: 6px;
}

.search {
    display: flex;
    align-items: center;
    width: 212px;
    height: 26px;
    margin: 0 12px 2px 9px;
    padding-left: 4px;
    border: 1px solid #606060;
    border-radius: 3px;
    background: #434343;
    font-size: 13px;
}

.search input {
    flex: 1;
    padding-left: 3px;
}

.search input::placeholder {
    color: #8c8c8c;
}

.win-buttons {
    display: flex;
    align-self: flex-start;
    height: 24px;
    border: 1px solid #616161;
    border-top: 0;
    border-radius: 0 0 4px 4px;
}

.win-buttons button {
    display: grid;
    place-items: center;
    width: 34px;
}

.win-buttons button + button {
    border-left: 1px solid #616161;
}

/* Control bar */
.controlbar {
    display: flex;
    align-items: center;
    flex: none;
    height: 43px;
    padding: 2px 20px 0 5px;
    border-bottom: 2px solid #3a3a3a;
    white-space: nowrap;
}

.side-grip {
    width: 3px;
    height: 24px;
    margin-right: 11px;
    background: repeating-linear-gradient(#383838 0 1px, transparent 1px 3px);
}

.mode {
    width: 91px;
    color: #cfcfcf;
}

.group-label {
    width: 52px;
    margin-left: 7px;
    color: #cfcfcf;
}

.ctl {
    display: grid;
    place-items: center;
    flex: none;
    width: 39px;
    height: 28px;
}

.toggle {
    display: flex;
    border: 1px solid #636363;
    border-radius: 3px;
    margin: 0 8px 0 2px;
}

.toggle button {
    display: grid;
    place-items: center;
    width: 29px;
    height: 28px;
}

.toggle .on, .link-wh {
    background: #2f2f2f;
}

.controlbar > .wide {
    width: 50px;
    margin: 0 4px 0 8px;
}

.controlbar > .mid {
    width: 46px;
}

.controlbar > .narrow {
    width: 40px;
}

.aligns {
    display: flex;
    margin-right: 6px;
}

.aligns button {
    display: grid;
    place-items: center;
    width: 33px;
}

.field {
    display: flex;
    align-items: center;
    flex: none;
    margin-right: 9px;
}

.field label {
    margin-right: 8px;
    color: #f0f0f0;
    border-bottom: 2px dotted #ccc;
    font-size: 12px;
    line-height: 15px;
    font-weight: 700;
}

.field .spin {
    display: grid;
    place-items: center;
    width: 23px;
    height: 26px;
    border: 1px solid #636363;
    background: #434343;
    border-radius: 3px 0 0 3px;
}

.field input {
    width: 72px;
    height: 26px;
    padding: 0 3px;
    border: 1px solid #636363;
    border-left: 0;
    border-radius: 0 3px 3px 0;
    background: #434343;
    color: #f0f0f0;
}

.field.off input, .field.off .spin {
    border-color: #595959;
    background: #595959;
    color: #7c7c7c;
}

.off .chev {
    stroke: #7c7c7c;
}

.link-wh {
    display: grid;
    place-items: center;
    flex: none;
    width: 28px;
    height: 28px;
    margin-right: 9px;
    border-radius: 3px;
}

.bar-menu {
    margin-left: auto;
}

/* Workspace */
.workspace {
    position: relative;
    display: flex;
    flex: 1;
    min-height: 0;
    border-bottom: 2px solid #323232;
}

.dock-head {
    display: flex;
    align-items: center;
    justify-content: flex-end;
    height: 15px;
    padding: 0 7px;
    border-bottom: 1px solid #343434;
    background: #434343;
}

.dock-head.left {
    justify-content: flex-start;
}

.tools {
    flex: none;
    width: 92px;
    border-right: 3px solid #3c3c3c;
    border-left: 1px solid #3c3c3c;
}

.tools > .grip {
    margin-top: 4px;
}

.tool-grid {
    display: grid;
    grid-template-columns: 34px 34px;
    grid-auto-rows: 28px;
    gap: 2px 3px;
    margin: 17px 7px 0 9px;
    padding-bottom: 3px;
    border-bottom: 1px solid #474747;
}

.tool-grid button {
    position: relative;
    display: grid;
    place-items: center;
    border-radius: 3px;
}

.tool-grid .on, .trio .on {
    background: #2f2f2f;
}

.more::after {
    content: "";
    position: absolute;
    right: 1px;
    bottom: 2px;
    border: 2px solid #c6c6c6;
    border-top-color: transparent;
    border-left-color: transparent;
}

.paint {
    position: relative;
    height: 70px;
    margin: 5px 7px;
}

.paint-fill, .paint-stroke {
    position: absolute;
    left: 0;
    top: 0;
    width: 44px;
    height: 44px;
    border: 1px solid #888;
    background: linear-gradient(135deg, #fff 48%, #e01010 48% 52%, #fff 52%);
}

.paint-stroke {
    left: 22px;
    top: 23px;
    border-color: #fff;
    background: #535353;
    box-shadow: inset 0 0 0 10px #000, inset 0 0 0 11px #fff;
}

.paint-swap {
    position: absolute;
    left: 55px;
    top: 1px;
}

.paint-default {
    position: absolute;
    left: 0;
    top: 51px;
}

.trio {
    display: flex;
    width: 73px;
    height: 26px;
    margin: 0 7px 4px;
    border: 1px solid #606060;
    border-radius: 2px;
}

.trio.modes {
    height: 24px;
}

.trio button {
    display: grid;
    flex: 1;
    place-items: center;
}

.screen-mode, .dots {
    display: block;
    margin: 10px auto 0 29px;
}

.dots {
    margin: 25px 0 0 34px;
}

.tools::after {
    content: "";
    display: block;
    margin-top: 15px;
    border-top: 1px solid #343434;
}

/* Document */
.document {
    display: flex;
    flex-direction: column;
    flex: 1;
    min-width: 0;
}

.tabs {
    display: flex;
    flex: none;
    height: 36px;
    background: #434343;
    border-bottom: 1px solid #3a3a3a;
}

.doc-tab {
    display: flex;
    align-items: center;
    gap: 12px;
    padding: 0 7px 0 12px;
    background: #535353;
    color: #f2f2f2;
    font-size: 14px;
    font-weight: 700;
}

.ruler-x, .ruler-y {
    background: #323232;
}

.ruler-x {
    width: 100%;
}

.ruler-text {
    fill: #b4b4b4;
    font-family: "DejaVu Sans Condensed", "DejaVu Sans", sans-serif;
    font-size: 10px;
}

.view {
    display: flex;
    flex: 1;
    min-height: 0;
}

.ruler-y {
    height: 100%;
}

.canvas {
    position: relative;
    flex: 1;
    overflow: hidden;
    border-left: 1px solid #000;
    background: #606060;
}

.artboard {
    width: 1166px;
    height: 100%;
    border-right: 1px solid #000;
    background: #fff;
}

.measure {
    position: absolute;
    left: 776px;
    top: 554px;
    padding: 0 4px;
    border-radius: 4px;
    background: #cbcbcb;
    color: #111;
    font-size: 13px;
    line-height: 21px;
}

.scroll-y {
    width: 20px;
    padding: 420px 1px 0;
    background: #4b4b4b;
}

.scroll-y i {
    display: block;
    height: 32px;
    border-radius: 9px;
    background: #636363;
}

.status {
    display: flex;
    align-items: flex-end;
    flex: none;
    height: 19px;
    padding-left: 5px;
    font-size: 13px;
}

.status input {
    width: 63px;
    height: 18px;
    padding: 3px 4px 0;
    border-right: 1px solid #5c5c5c;
    background: #434343;
}

.status .board {
    width: 50px;
    margin-left: 2px;
}

.status .drop, .status .step, .status .play {
    display: grid;
    place-items: center;
    width: 22px;
    height: 18px;
    padding-top: 5px;
}

.status .drop {
    margin-right: 6px;
    background: #434343;
}

.status .step {
    opacity: 0.35;
}

.tool-name {
    width: 254px;
    height: 18px;
    margin-left: 2px;
    border: 0 solid #464646;
    border-width: 0 1px;
    line-height: 24px;
    text-align: center;
}

.scroll-x {
    display: flex;
    align-items: center;
    flex: 1;
    height: 19px;
    padding-left: 5px;
    background: #4b4b4b;
}

.scroll-x i {
    width: 31px;
    height: 18px;
    margin-left: 519px;
    border-radius: 9px;
    background: #636363;
}

/* Docks */
.icon-dock {
    flex: none;
    width: 50px;
    border-left: 2px solid #383838;
}

.dock-cell {
    height: 51px;
    padding-top: 3px;
    border-bottom: 1px solid #383838;
}

.dock-cell svg {
    margin: 12px auto 0;
}

.dock-cell.first {
    height: 447px;
    padding-top: 402px;
}

.dock-cell.tall {
    height: 87px;
}

.panel-dock {
    flex: none;
    width: 130px;
    border: 0 solid #383838;
    border-width: 0 2px 0 3px;
}

.panel-dock .dock-head {
    padding-right: 5px;
}

.dock-group {
    display: flex;
    flex-direction: column;
    gap: 6px;
    padding: 4px 7px 6px;
    border-bottom: 2px solid #343434;
}

.dock-group button {
    display: flex;
    align-items: center;
    gap: 10px;
    height: 29px;
    padding-left: 6px;
    border-radius: 2px;
    color: #f0f0f0;
}

.dock-group .on {
    background: #373737;
}

/* Floating panels */
.panel, .color-panel, .mini-panel {
    position: absolute;
    display: flex;
    flex-direction: column;
    border: 1px solid #333;
    background: #535353;
}

.panel-head {
    display: flex;
    align-items: center;
    justify-content: flex-end;
    gap: 14px;
    height: 16px;
    padding-right: 6px;
    border-bottom: 1px solid #333;
    background: #434343;
}

.panel-tabs {
    display: flex;
    height: 34px;
    border-bottom: 1px solid #3a3a3a;
    background: #434343;
    color: #a8a8a8;
}

.panel-tabs button {
    padding: 0 12px 2px;
    border-right: 1px solid #3e3e3e;
}

.panel-tabs .on {
    margin-bottom: -1px;
    padding-right: 9px;
    background: #535353;
    color: #f4f4f4;
    font-weight: 600;
}

.tab-tools {
    display: flex;
    align-items: center;
    gap: 8px;
    margin-left: auto;
    padding-right: 8px;
}

.tab-tools i {
    width: 1px;
    height: 14px;
    background: #aaa;
}

.panel-foot {
    display: flex;
    align-items: center;
    height: 23px;
}

.panel-foot button {
    display: grid;
    place-items: center;
    width: 33px;
}

.resizer {
    height: 11px;
    padding-top: 2px;
    border-top: 1px solid #333;
}

.layers {
    top: 13px;
    right: 130px;
    width: 455px;
    border-top-width: 3px;
}

.layer-list {
    height: 343px;
    margin: 8px 7px 0;
    border: 1px solid #606060;
}

.layer-row {
    display: flex;
    align-items: center;
    height: 25px;
    background: #4f657c;
    color: #f0f0f0;
}

.eye {
    margin: 0 24px 0 4px;
}

.layer-mark {
    width: 4px;
    height: 23px;
    margin: 0 8px;
    background: #4c7df0;
}

.thumb {
    margin: 0 6px 0 16px;
}

.target {
    margin-left: auto;
}

.layers .panel-foot {
    padding: 0 25px 0 6px;
}

.layers .panel-foot span {
    margin-right: auto;
}

.swatches {
    top: 536px;
    right: 139px;
    width: 478px;
    border-radius: 5px 5px 0 0;
    overflow: hidden;
}

.swatches .panel-tabs .on {
    padding-right: 12px;
}

.swatches .tab-tools {
    padding-right: 7px;
}

.swatch-bar {
    display: flex;
    justify-content: space-between;
    padding: 7px;
    height: 51px;
}

.view-toggle {
    display: flex;
    width: 61px;
    height: 30px;
    border: 1px solid #636363;
    border-radius: 3px;
}

.view-toggle button {
    display: grid;
    flex: 1;
    place-items: center;
}

.view-toggle button + button {
    border-left: 1px solid #636363;
}

.swatch-box {
    height: 243px;
    margin: 0 7px;
    padding: 1px 0 0 1px;
    border: 1px solid #606060;
}

.swatch-grid {
    display: grid;
    grid-template-columns: repeat(12, 33px);
    grid-auto-rows: 33px;
    gap: 2px;
}

.swatch-grid.group {
    margin-top: 4px;
}

.picked {
    border: 1px solid #fff;
}

.g-gray {
    background: linear-gradient(90deg, #fff, #111);
}

.g-sun {
    background: linear-gradient(90deg, #ffe600, #fbb040 50%, #ef5a3a);
}

.g-sky {
    background: linear-gradient(90deg, #1c83c6, transparent), repeating-conic-gradient(#fff 0 25%, #bbb 0 50%) 0 0 / 4px 4px;
}

.g-fade {
    background: #000;
}

.g-fade i {
    display: block;
    height: 100%;
    background: radial-gradient(circle, transparent 45%, #000 62%), repeating-conic-gradient(#fff 0 25%, #ccc 0 50%) 0 0 / 4px 4px;
}

.swatches .panel-foot {
    padding: 0 24px 0 6px;
}

.swatches .push {
    margin-right: auto;
}

.color-panel {
    right: 180px;
    bottom: 9px;
    width: 299px;
    height: 200px;
    justify-content: flex-end;
}

.spectrum {
    height: 40px;
    margin: 0 21px 7px 8px;
    background: linear-gradient(transparent 65%, rgba(0, 0, 0, 0.85)), linear-gradient(90deg, #e8202a, #f0e030 17%, #20a040 32%, #30b060 43%, #20b8e8 52%, #2a50b0 61%, #3a3090 71%, #80308f 81%, #e01090 90%, #e8202a);
}

.mini-panel {
    top: 628px;
    left: 65px;
    width: 49px;
    height: 69px;
    border-radius: 5px 5px 0 0;
    overflow: hidden;
    box-shadow: 1px 2px 4px rgba(0, 0, 0, 0.3);
}

.mini-panel > .grip {
    margin: 5px auto 10px;
}

.mini-panel > svg {
    margin: 0 auto;
}

/* Taskbar */
.taskbar {
    display: flex;
    flex: none;
    height: 40px;
    background: #1c1c1c;
}

.taskbar button {
    display: grid;
    place-items: center;
    flex: none;
    width: 46px;
    padding-bottom: 2px;
}

.taskbar .sys {
    width: 45px;
}

.taskbar .last {
    margin-right: 3px;
}

.taskbar .open {
    background: linear-gradient(#7ab2e2, #7ab2e2) 50% 35px / 35px 3px no-repeat;
}

.taskbar .active {
    background-color: #4c4c4c;
    background-size: 100% 3px;
}

.cc {
    width: 18px;
    height: 18px;
    border-radius: 3px;
    font-size: 10px;
    font-weight: 700;
    line-height: 17px;
}

.id { background: #49021f; color: #ff3366; }
.ai { background: #330000; color: #ff9a00; }
.ps { background: #001e36; color: #31a8ff; }
.ae { background: #00005b; color: #9999ff; }
.br { background: #000b1d; color: #fff; }

.tray {
    display: flex;
    align-items: center;
    margin-left: auto;
    color: #fff;
    font-size: 14px;
}

.help {
    margin-right: 4px;
}

.lang {
    margin: 0 16px 0 9px;
}

.notif {
    margin: 2px 24px 0 22px;
}

.peek {
    align-self: stretch;
    width: 6px;
    border-left: 1px solid #666;
}
```
